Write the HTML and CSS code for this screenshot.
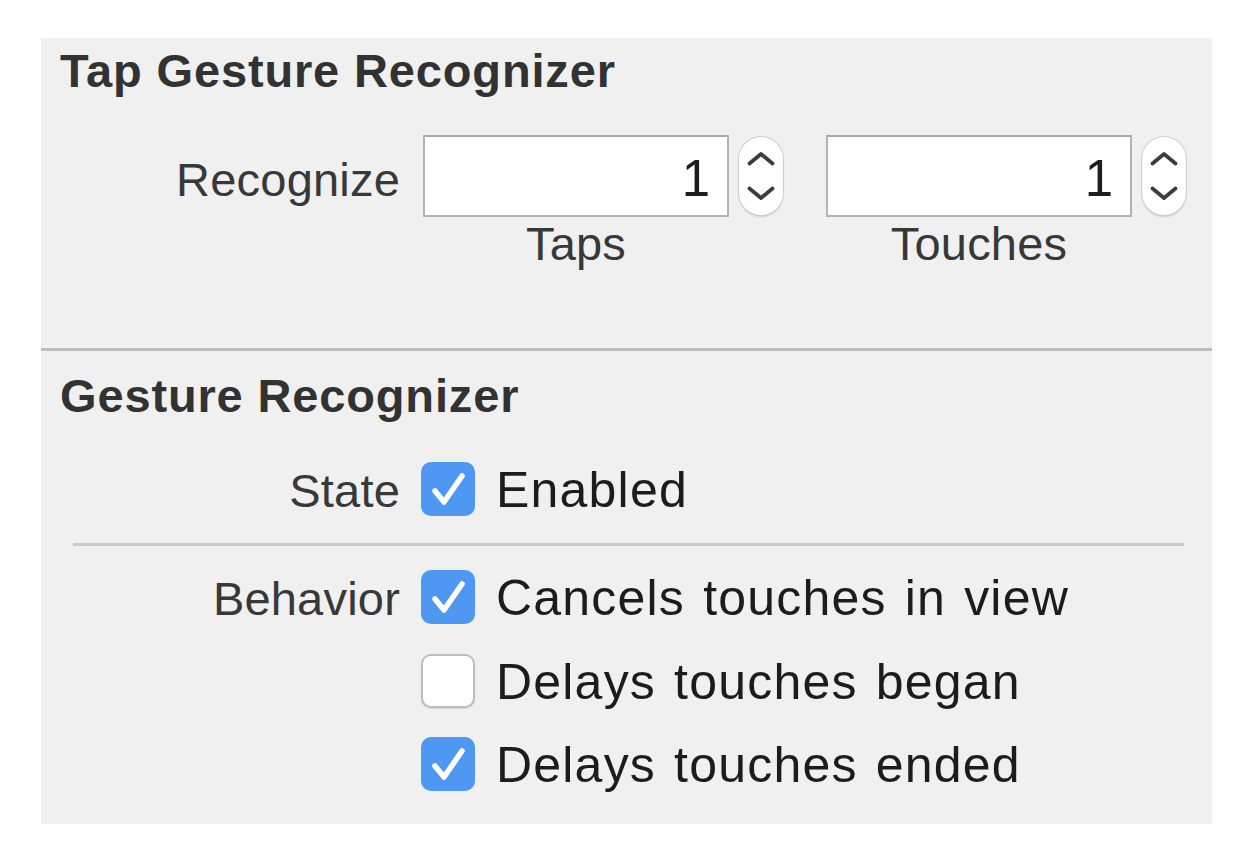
FILE: index.html
```html
<!DOCTYPE html>
<html lang="en">
<head>
<meta charset="utf-8">
<title>Tap Gesture Recognizer</title>
<link rel="stylesheet" href="styles.css">
</head>
<body>
<div class="panel">
  <section class="section tap">
    <h2 class="title">Tap Gesture Recognizer</h2>
    <div class="recognize-row">
      <div class="label">Recognize</div>
      <div class="spin">
        <div class="spin-top">
          <div class="field">1</div>
          <div class="stepper">
            <svg width="44" height="78" viewBox="0 0 44 78"><path d="M10.5 26.5 L22 17 L33.5 26.5" /><path d="M10.5 51.5 L22 61 L33.5 51.5" /></svg>
          </div>
        </div>
        <div class="caption">Taps</div>
      </div>
      <div class="spin second">
        <div class="spin-top">
          <div class="field">1</div>
          <div class="stepper">
            <svg width="44" height="78" viewBox="0 0 44 78"><path d="M10.5 26.5 L22 17 L33.5 26.5" /><path d="M10.5 51.5 L22 61 L33.5 51.5" /></svg>
          </div>
        </div>
        <div class="caption">Touches</div>
      </div>
    </div>
  </section>
  <div class="divider"></div>
  <section class="section gesture">
    <h2 class="title title-2">Gesture Recognizer</h2>
    <div class="form-row state-row">
      <div class="label">State</div>
      <div class="options">
        <div class="option">
          <span class="box checked"><svg width="54" height="54" viewBox="0 0 54 54"><path d="M14 29 L23 40 L41 14"/></svg></span>
          <span class="opt-text">Enabled</span>
        </div>
      </div>
    </div>
    <div class="inner-divider"></div>
    <div class="form-row behavior-row">
      <div class="label">Behavior</div>
      <div class="options">
        <div class="option">
          <span class="box checked"><svg width="54" height="54" viewBox="0 0 54 54"><path d="M14 29 L23 40 L41 14"/></svg></span>
          <span class="opt-text">Cancels touches in view</span>
        </div>
        <div class="option">
          <span class="box"></span>
          <span class="opt-text">Delays touches began</span>
        </div>
        <div class="option">
          <span class="box checked"><svg width="54" height="54" viewBox="0 0 54 54"><path d="M14 29 L23 40 L41 14"/></svg></span>
          <span class="opt-text">Delays touches ended</span>
        </div>
      </div>
    </div>
  </section>
</div>
</body>
</html>
```

FILE: styles.css
```css
html, body {
  margin: 0;
  padding: 0;
  background: #ffffff;
}

body {
  font-family: "Liberation Sans", Arial, sans-serif;
  color: #333333;
}

.panel {
  margin: 38px 0 0 41px;
  width: 1171px;
  height: 786px;
  background: #f0f0f0;
  display: flex;
  flex-direction: column;
}

.section.tap {
  height: 310px;
  padding-top: 6px;
  box-sizing: border-box;
}

.title {
  margin: 0;
  padding-left: 19px;
  font-size: 47px;
  line-height: 54px;
  font-weight: bold;
  letter-spacing: 0.85px;
  color: #323232;
}

.recognize-row {
  display: flex;
  align-items: flex-start;
  margin-top: 37px;
}

.label {
  width: 359px;
  flex: none;
  text-align: right;
  font-size: 47px;
  line-height: 54px;
  letter-spacing: 0.2px;
  color: #383838;
}

.recognize-row .label {
  margin-top: 18px;
  margin-right: 23px;
}

.spin {
  display: flex;
  flex-direction: column;
}

.spin.second {
  margin-left: 43px;
}

.spin-top {
  display: flex;
  align-items: flex-start;
}

.field {
  width: 306px;
  height: 82px;
  box-sizing: border-box;
  border: 2px solid #b3b3b3;
  border-top-color: #a8a8a8;
  background: #ffffff;
  text-align: right;
  padding: 15px 17px 0 0;
  font-size: 51px;
  line-height: 54px;
  color: #1e1e1e;
}

.stepper {
  width: 44px;
  height: 78px;
  margin: 2px 0 0 10px;
  box-sizing: border-box;
  border-radius: 22px;
  background: #ffffff;
  box-shadow: 0 0 0 1px #cdcdcd, 0 2px 2px rgba(0, 0, 0, 0.16);
}

.stepper svg {
  display: block;
}

.stepper path {
  fill: none;
  stroke: #3d3d3d;
  stroke-width: 3.8;
  stroke-linecap: round;
  stroke-linejoin: round;
}

.caption {
  width: 306px;
  text-align: center;
  font-size: 47px;
  line-height: 54px;
  letter-spacing: 0.2px;
  color: #383838;
}

.divider {
  height: 3px;
  background: #bdbdbd;
  flex: none;
}

.title-2 {
  margin-top: 18px;
}

.form-row {
  display: flex;
  align-items: flex-start;
}

.form-row .label {
  margin-top: 2px;
  margin-right: 21px;
}

.state-row {
  margin-top: 39px;
}

.inner-divider {
  height: 3px;
  background: #c9c9c9;
  margin: 25px 28px 0 32px;
}

.behavior-row {
  margin-top: 24px;
}

.options {
  display: flex;
  flex-direction: column;
  gap: 28.5px;
}

.option {
  display: flex;
  align-items: flex-start;
}

.box {
  width: 54px;
  height: 54px;
  flex: none;
  box-sizing: border-box;
  border-radius: 10px;
  background: #ffffff;
  border: 2px solid #bcbcbc;
  box-shadow: 0 1px 1px rgba(0, 0, 0, 0.1);
}

.box.checked {
  background: #4e97f3;
  border: none;
  box-shadow: none;
}

.box svg {
  display: block;
}

.box path {
  fill: none;
  stroke: #ffffff;
  stroke-width: 5.5;
  stroke-linecap: round;
  stroke-linejoin: round;
}

.opt-text {
  margin: 1px 0 0 21px;
  font-size: 50px;
  line-height: 54px;
  letter-spacing: 1.2px;
  word-spacing: 3px;
  color: #1c1c1c;
  white-space: nowrap;
}
```
